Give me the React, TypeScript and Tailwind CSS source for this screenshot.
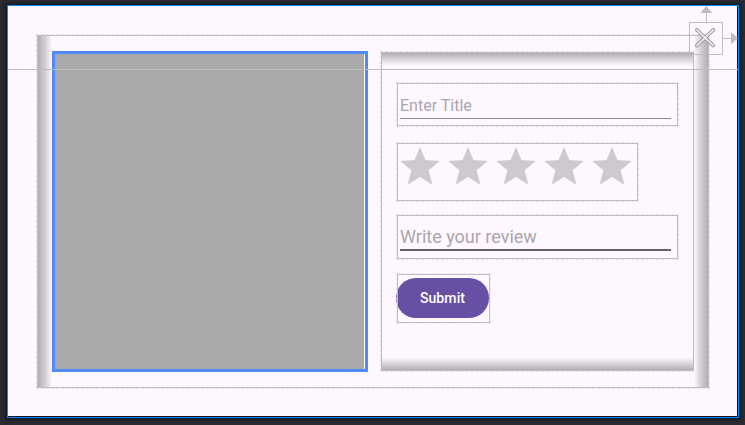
function Star() {
  return (
    <svg className="block h-[38px] w-10 shrink-0" viewBox="0 0 40 38" fill="#cec9d0">
      <path d="M20 0l5.3 12.9L39.8 14.1 28.6 23.3 32.2 37.4 20 30 7.8 37.4 11.4 23.3 0.2 14.1 14.7 12.9z" />
    </svg>
  );
}

function Field({ label, className, textClass, lineClass }: { label: string; className: string; textClass: string; lineClass: string }) {
  return (
    <div className={`flex w-[281px] flex-col border border-[#bdbdbd] pr-[6px] pl-[2px] outline-1 outline-dashed outline-[#e6e2e8] ${className}`}>
      <span className={`whitespace-nowrap text-[#aaa6ad] ${textClass}`}>{label}</span>
      <div className={lineClass} />
    </div>
  );
}

function CloseHandle() {
  return (
    <svg className="absolute top-[5px] left-[688px]" width="52" height="52" viewBox="688 5 52 52" fill="none">
      <path d="M689.5 22.5h33v32h-33zM706.5 22V12M723 38.5h9" stroke="#bdbdbd" />
      <path d="M706.2 6l6 7h-12zM738 38.3l-7-6v12z" fill="#bdbdbd" />
      <path d="M697 30L713.2 45.5M713.2 30L697 45.5" stroke="#8d8d8d" strokeWidth="3.8" strokeLinecap="round" />
      <path d="M697 30L713.2 45.5M713.2 30L697 45.5" stroke="#ebe6ed" strokeWidth="2" strokeLinecap="round" />
    </svg>
  );
}

export default function App() {
  return (
    <div className="relative h-[425px] w-[745px] overflow-hidden bg-[#2b2c31] pt-[5px] pl-[7px] font-['Roboto','Liberation_Sans',sans-serif]">
      <div className="h-[413px] w-[732px] border border-[#0a84ff] bg-[#fef7ff] pt-[29px] pl-[29px] shadow-[inset_-1px_-1px_0_#111318,0_0_0_1px_#0c2238,0_0_3px_2px_#17191d]">
        <div className="flex h-[353px] w-[672px] border border-[#bdbdbd] outline-1 outline-dashed outline-[#e6e2e8]">
          <div className="w-[14px] shrink-0 bg-linear-to-r from-[#b1b0b2] via-[#d2cfd3] to-[#fef7ff]" />
          <div className="mt-[15px] h-[321px] w-[316px] shrink-0 border-[3px] border-[#508bf5] bg-[#fef7ff] pr-px">
            <div className="h-full bg-[#a9a9a9]" />
          </div>
          <div className="mt-4 ml-[13px] flex h-[319px] w-[313px] shrink-0 flex-col border border-[#bdbdbd] outline-1 outline-dashed outline-[#e6e2e8]">
            <div className="h-[13px] shrink-0 bg-linear-to-b from-[#b1b0b2] via-[#dad6dc] to-[#fef7ff]" />
            <div className="isolate flex h-[291px] flex-col items-start pt-[17px] pl-[15px]">
              <Field label="Enter Title" className="h-[43px] pt-[12px]" textClass="h-[22px] text-[16px] leading-[20px]" lineClass="h-px w-[271px] bg-[#8d8991]" />
              <div className="mt-[17px] flex h-[58px] w-[241px] gap-2 border border-[#bdbdbd] pt-[3px] pl-[2px] outline-1 outline-dashed outline-[#e6e2e8]">
                <Star />
                <Star />
                <Star />
                <Star />
                <Star />
              </div>
              <Field label="Write your review" className="mt-[14px] h-[44px] pt-[10px]" textClass="h-[23px] text-[18px] leading-[21px]" lineClass="h-[1.5px] w-[271px] bg-[#66626a]" />
              <div className="mt-[15px] flex h-[49px] w-[93px] shrink-0 flex-col border border-[#bdbdbd] pt-[3px] outline-1 outline-dashed outline-[#e6e2e8]/60">
                <button className="relative -z-10 -ml-[2px] h-10 w-[93px] shrink-0 rounded-full bg-[#6750a4] text-[14px] font-medium tracking-[0.1px] text-white">Submit</button>
              </div>
            </div>
            <div className="h-[13px] shrink-0 bg-linear-to-t from-[#b1b0b2] via-[#dad6dc] to-[#fef7ff]" />
          </div>
          <div className="w-[14px] shrink-0 bg-linear-to-l from-[#b1b0b2] via-[#d2cfd3] to-[#fef7ff]" />
        </div>
      </div>
      <div className="absolute top-[69px] left-2 h-px w-[730px] bg-[#bdbdbd]" />
      <CloseHandle />
    </div>
  );
}
